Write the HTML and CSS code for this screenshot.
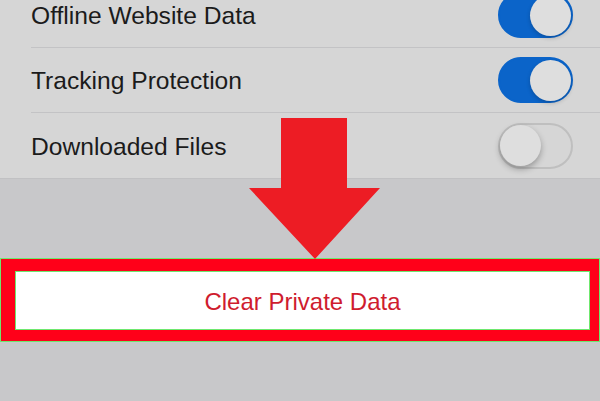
FILE: index.html
```html
<!DOCTYPE html>
<html lang="en">
<head>
    <meta charset="UTF-8">
    <meta name="viewport" content="width=device-width, initial-scale=1.0">
    <title>Clear Private Data</title>
    <link rel="stylesheet" href="styles.css">
</head>
<body>
    <div class="screen">
        <ul class="settings">
            <li class="row">
                <div class="row-inner">
                    <span class="label">Offline Website Data</span>
                    <span class="switch on"><span class="knob"></span></span>
                </div>
            </li>
            <li class="row">
                <div class="row-inner">
                    <span class="label">Tracking Protection</span>
                    <span class="switch on"><span class="knob"></span></span>
                </div>
            </li>
            <li class="row">
                <div class="row-inner">
                    <span class="label">Downloaded Files</span>
                    <span class="switch"><span class="knob"></span></span>
                </div>
            </li>
        </ul>

        <div class="highlight">
            <div class="clear-btn">Clear Private Data</div>
        </div>

        <!-- annotation arrow over the list -->
        <svg class="arrow" width="600" height="260" viewBox="0 0 600 260">
            <polygon points="281,118 347,118 347,188 380,188 315,259 249,188 281,188" fill="#ed1c24"/>
        </svg>
    </div>
</body>
</html>
```

FILE: styles.css
```css
html, body {
    margin: 0;
    padding: 0;
}
body {
    font-family: "Liberation Sans", Arial, sans-serif;
    background-color: #c8c8ca;
    width: 600px;
    height: 401px;
    overflow: hidden;
}
.screen {
    position: relative;
    display: flow-root;
    height: 401px;
}
.settings {
    list-style: none;
    margin: -17px 0 0 0;
    padding: 0;
    background-color: #d6d6d6;
    border-bottom: 1px solid #c1c1c3;
}
.row {
    padding-left: 31px;
}
.row-inner {
    height: 64px;
    display: flex;
    align-items: center;
    justify-content: space-between;
    padding-right: 27px;
    border-bottom: 1px solid #c3c3c5;
}
.row:last-child .row-inner {
    border-bottom: none;
    height: 65px;
}
.label {
    font-size: 24.6px;
    color: #1b1b1b;
    padding-top: 2px;
}
.switch {
    width: 75px;
    height: 46px;
    box-sizing: border-box;
    border-radius: 23px;
    border: 2px solid #bfbfbf;
    display: flex;
    align-items: center;
    justify-content: flex-start;
}
.switch.on {
    background-color: #0b64c9;
    border-color: #0b64c9;
    justify-content: flex-end;
}
.knob {
    width: 41px;
    height: 41px;
    border-radius: 50%;
    background-color: #dedede;
    box-shadow: 0 3px 6px rgba(0,0,0,0.3);
}
.switch.on .knob {
    box-shadow: 0 2px 4px rgba(0,0,0,0.2);
}
.highlight {
    margin-top: 79px;
    background-color: #ff0019;
    border: 1px solid #6ee86e;
    padding: 12px 9px 11px 14px;
}
.clear-btn {
    height: 59px;
    box-sizing: border-box;
    background-color: #fff;
    border: 1px solid #6ee86e;
    display: flex;
    align-items: center;
    justify-content: center;
    font-size: 24px;
    color: #cf1c2e;
    padding-top: 2px;
}
.arrow {
    position: absolute;
    left: 0;
    top: 0;
}
```
